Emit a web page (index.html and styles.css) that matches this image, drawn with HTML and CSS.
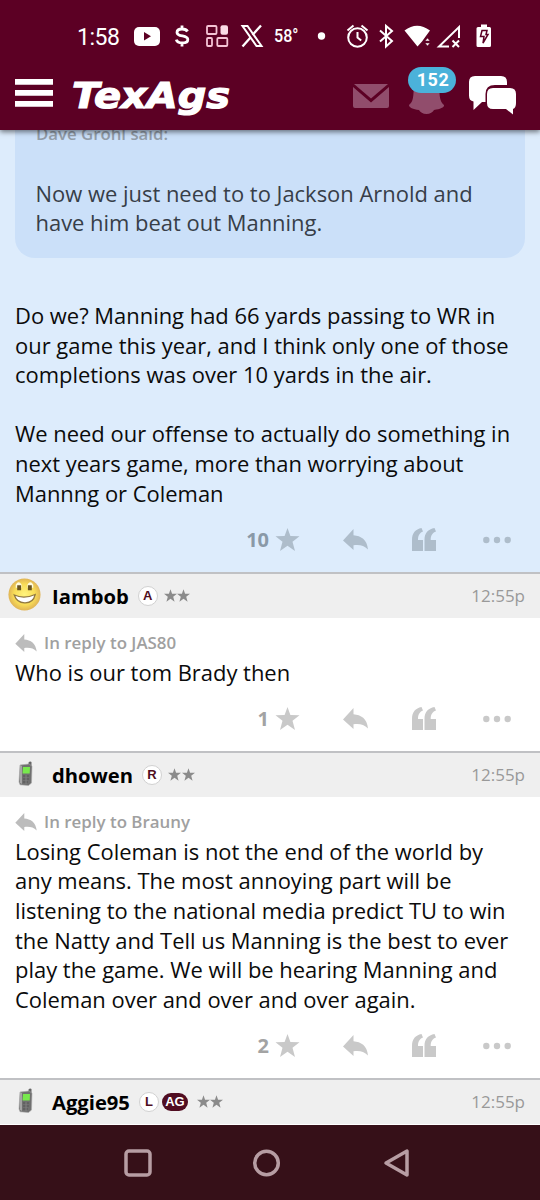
FILE: index.html
```html
<!DOCTYPE html>
<html lang="en">
<head>
<meta charset="utf-8">
<title>TexAgs</title>
<link rel="stylesheet" href="styles.css">
</head>
<body>
<svg class="defs" width="0" height="0">
  <symbol id="star" viewBox="0 0 24 23"><path d="M12 0l2.900 8.100 9.100.2-7 5.400 2.500 9.300L12 17.700 4.500 23 7 13.700 0 8.300l9.100-.2z"/></symbol>
  <symbol id="reply" viewBox="0 0 25 21"><path d="M0 11.500L10.500 0v6.300C18 7 24 10.500 25 20.500c-4-4.500-9-5-14.500-4.300V21z"/></symbol>
  <symbol id="quote" viewBox="0 0 24 23"><path d="M0 23V12C0 5 3.500 1.200 9.500 0L11 3.500C7.500 5 6 7.500 6 12h5v11zM12.500 23V12c0-7 3.500-10.800 10-12L24 3.500c-3.800 1.500-5.300 4-5.300 8.500H24v11z"/></symbol>
  <symbol id="dots" viewBox="0 0 28 8"><circle cx="3.300" cy="4" r="3.200"/><circle cx="14" cy="4" r="3.200"/><circle cx="24.700" cy="4" r="3.200"/></symbol>
  <symbol id="phone" viewBox="0 0 18 26">
    <path d="M11.500 1.500q1.500-1.500 3-.5v6h-3z" fill="#666"/>
    <path d="M3 4l9-1 3 2-.5 17-3 2.500-8.500-.7L2 21z" fill="#707070" stroke="#aaa" stroke-width=".6"/>
    <path d="M3 4l2 1v18l-2-1z" fill="#a5a5a5"/>
    <path d="M6 6h7l-.3 6.500H5.500z" fill="#78e94d"/>
    <path d="M6 15h6M6 18h6M6 21h5" stroke="#555" stroke-width="1.200"/>
    <path d="M9 14v9" stroke="#818181"/>
  </symbol>
</svg>

<header class="top">
  <div class="status">
    <svg width="540" height="72" viewBox="0 0 540 72" fill="#fff">
      <text class="clock" x="77" y="45" textLength="43">1:58</text>
      <rect x="134" y="27" width="26" height="19" rx="5"/><path d="M144 32l7 4.200-7 4.300z" fill="#5c0024"/>
      <path d="M182 25.500v4M182 42.500v4M187.500 31.500c-1-2-3-2.500-5.500-2.500-3 0-5 1.200-5 3.400 0 4.800 10.800 2.400 10.800 7 0 2.300-2.300 3.500-5.500 3.500s-5.300-1-6-3.300" fill="none" stroke="#fff" stroke-width="2.800"/>
      <g fill="none" stroke="#f5c3d5" stroke-width="1.800"><rect x="207" y="26" width="9.500" height="8" rx="1"/><rect x="207" y="38" width="5" height="8" rx="1"/><rect x="217.300" y="38" width="10" height="8" rx="1"/></g><rect x="220.500" y="25.200" width="7.500" height="9.500" rx="2" fill="#fbdbe6"/>
      <path d="M242.500 26h5l14 20h-5z" fill="none" stroke="#fff" stroke-width="2"/><path d="M261 25.500l-8.500 9.500M250.500 37.500l-8 9" fill="none" stroke="#fff" stroke-width="2.300"/>
      <text class="temp" x="274" y="42" textLength="24.500" lengthAdjust="spacingAndGlyphs">58°</text>
      <circle cx="321.500" cy="36" r="3.700"/>
      <g fill="none" stroke="#fff" stroke-width="2"><circle cx="357.500" cy="37.500" r="9.300"/><path d="M347.500 30.500l6-5M361.500 25.500l6 5M357.500 32v5.500l3.700 3"/>
      <path d="M380 30.500l12 10.500-6 5.500V26l6 5L380 41.500"/>
      <path d="M449 46.500H439L459 27v11"/><path d="M452.500 40.500l6.500 6.500M459 40.500l-6.500 6.500"/></g>
      <path d="M404.500 30.500q12.500-9.500 25.500 0l-5.500 7.500-2.500 3.500-4.500 5z"/><path d="M425 41l2.500-3 2.500 3zM425 43l2.500 3 2.500-3z" stroke="#5c0024" stroke-width=".5"/>
      <path d="M478 27h3v-2.500h6V27h2.500q1.500 0 1.500 1.500v17q0 1.500-1.500 1.500H478q-1.500 0-1.500-1.500v-17Q476.500 27 478 27z"/>
      <path d="M482 30.500h5l-1 4h2l-5 8.500 1-6.500h-3.500z" fill="#fff" stroke="#5c0024" stroke-width="1.500"/>
    </svg>
  </div>
  <div class="brandbar">
    <svg class="brand" width="540" height="58" viewBox="0 72 540 58" fill="#fff">
      <path d="M15 79h38v5.700H15zM15 90h38v5.700H15zM15 101h38v5.700H15z"/>
      <text class="logo" x="72" y="107.500" textLength="158" lengthAdjust="spacingAndGlyphs">TexAgs</text>
      <path d="M353 87l18 15.500L389 87v19q0 2-2 2h-32q-2 0-2-2z" fill="#914d6c"/><path d="M354 84h34l-17 14.500z" fill="#914d6c"/>
      <path d="M426.500 82c8 0 12.500 4 13 11 .3 6 1.500 9.500 4.500 12 .5 2.500-4 4-10 5-1 2-4 4-7.500 4s-6.500-2-7.500-4c-6-.7-10-2.500-10-5 3-2.500 4-5 4.500-12 0-7 5-11 13-11z" fill="#914d6c"/>
      <path d="M475 76h26q6 0 6 6v3h-12q-9.500 0-9.500 9v8h-3.500l-8.500 8v-8.500q-4.500-.7-4.500-6V82q0-6 6-6z"/>
      <path d="M493 88h17q6 0 6 6v9q0 5-3 6v5.500l-7-5.500H493q-6 0-6-6v-9q0-6 6-6z"/>
    </svg>
    <span class="count">152</span>
  </div>
</header>

<main class="feed">
  <article class="post mine">
    <blockquote class="quoted">
      <p class="said">Dave Grohl said:</p>
      <p class="q1">Now we just need to to Jackson Arnold and<br>have him beat out Manning.</p>
    </blockquote>
    <div class="body">Do we? Manning had 66 yards passing to WR in<br>our game this year, and I think only one of those<br>completions was over 10 yards in the air.<br><br>We need our offense to actually do something in<br>next years game, more than worrying about<br>Mannng or Coleman</div>
    <div class="actions"><span class="likes">10</span><svg class="a-star"><use href="#star"/></svg><svg class="a-reply"><use href="#reply"/></svg><svg class="a-quote"><use href="#quote"/></svg><svg class="a-dots"><use href="#dots"/></svg></div>
  </article>

  <article class="post">
    <div class="byline">
      <svg class="avatar" viewBox="0 0 36 36"><defs><radialGradient id="face"><stop offset="0" stop-color="#fff47e"/><stop offset=".65" stop-color="#f8dc57"/><stop offset="1" stop-color="#e0b455"/></radialGradient></defs><circle cx="18" cy="18" r="16.500" fill="url(#face)"/><path d="M9 8q3-5 6 0v3H9zM21 8q3-5 6 0v3h-6z" fill="#fffbe0"/><path d="M10.500 8.500h4v5h-4zM21.500 8.500h4v5h-4z" fill="#695421"/><path d="M7.500 18.500q10 4.500 21.500-.5-2 9-11 8.500-8 0-10.500-8z" fill="#fff" stroke="#91783f" stroke-width="1.300"/></svg>
      <b class="name">Iambob</b><span class="badge">A</span><svg class="rank"><use href="#star"/></svg><svg class="rank"><use href="#star"/></svg><time>12:55p</time>
    </div>
    <div class="replyto"><svg><use href="#reply"/></svg>In reply to JAS80</div>
    <div class="body">Who is our tom Brady then</div>
    <div class="actions"><span class="likes">1</span><svg class="a-star"><use href="#star"/></svg><svg class="a-reply"><use href="#reply"/></svg><svg class="a-quote"><use href="#quote"/></svg><svg class="a-dots"><use href="#dots"/></svg></div>
  </article>

  <article class="post">
    <div class="byline">
      <svg class="avatar phone"><use href="#phone"/></svg>
      <b class="name">dhowen</b><span class="badge">R</span><svg class="rank"><use href="#star"/></svg><svg class="rank"><use href="#star"/></svg><time>12:55p</time>
    </div>
    <div class="replyto"><svg><use href="#reply"/></svg>In reply to Brauny</div>
    <div class="body">Losing Coleman is not the end of the world by<br>any means. The most annoying part will be<br>listening to the national media predict TU to win<br>the Natty and Tell us Manning is the best to ever<br>play the game. We will be hearing Manning and<br>Coleman over and over and over again.</div>
    <div class="actions"><span class="likes">2</span><svg class="a-star"><use href="#star"/></svg><svg class="a-reply"><use href="#reply"/></svg><svg class="a-quote"><use href="#quote"/></svg><svg class="a-dots"><use href="#dots"/></svg></div>
  </article>

  <article class="post">
    <div class="byline">
      <svg class="avatar phone"><use href="#phone"/></svg>
      <b class="name">Aggie95</b><span class="badge">L</span><span class="badge ag">AG</span><svg class="rank"><use href="#star"/></svg><svg class="rank"><use href="#star"/></svg><time>12:55p</time>
    </div>
  </article>
</main>

<nav class="system">
  <svg width="540" height="75" viewBox="0 1125 540 75" fill="none" stroke="#b79da3" stroke-width="3.500" stroke-linejoin="round"><rect x="126" y="1151" width="24" height="24" rx="3"/><circle cx="266.500" cy="1163" r="11.800"/><path d="M386 1163l21-12v24z"/></svg>
</nav>
</body>
</html>
```
FILE: styles.css
```css
* { box-sizing: border-box; }
body {
  margin: 0;
  width: 540px;
  height: 1200px;
  display: flex;
  flex-direction: column;
  overflow: hidden;
  background: #fff;
  color: #0b0b0b;
  font-family: "Open Sans", "Noto Sans", sans-serif;
}
svg { display: block; flex: none; }
.defs { position: absolute; }

.top {
  height: 130px;
  flex: none;
  background: #5c0024;
  position: relative;
  z-index: 2;
  box-shadow: 0 2px 5px rgba(0, 0, 0, .5);
}
.status { height: 72px; }
.clock { font: 400 23px Roboto, sans-serif; }
.temp { font: 500 18.500px Roboto, sans-serif; }
.brandbar { position: relative; height: 58px; }
.logo {
  font: italic bold 35px "DejaVu Sans", sans-serif;
  stroke: #fff;
  stroke-width: 1.200px;
}
.count {
  position: absolute;
  left: 408px;
  top: -5px;
  width: 48px;
  height: 26px;
  border-radius: 13px;
  background: #4bb2da;
  color: #fff;
  font: bold 18px/26px Roboto, sans-serif;
  letter-spacing: .5px;
  text-align: center;
  padding-left: 2px;
}

.feed { height: 995px; flex: none; overflow: hidden; }
.post { border-bottom: 2px solid #c0c1c4; }
.post:last-child { border-bottom: 0; }
.mine { background: #ddecfc; height: 444px; }
.quoted {
  margin: 0 15px;
  height: 128px;
  padding: 0 21px;
  background: #cbe0f9;
  border-radius: 0 0 20px 20px;
  color: #373e48;
}
.quoted p { margin: 0; }
.said {
  height: 48.500px;
  font-weight: 600;
  font-size: 16.800px;
  line-height: 8px;
  color: #929ca8;
}
.q1, .body { font-size: 21.950px; line-height: 29.600px; white-space: nowrap; }
.q1 { margin-left: -.5px !important; }
.body { padding-left: 15px; }
.mine .body { padding-top: 43px; }
.actions {
  height: 63.700px;
  display: flex;
  align-items: center;
  justify-content: flex-end;
  padding-right: 29px;
  padding-bottom: 1px;
  fill: #c9c9c9;
}
.mine .actions { fill: #aebdcb; }
.likes { font-size: 20px; font-weight: 700; color: #a3a3a3; margin-right: 6px; }
.mine .likes { color: #8a99a7; }
.a-star { width: 25px; height: 23px; }
.a-reply { width: 25px; height: 21px; margin-left: 43px; }
.a-quote { width: 24px; height: 23px; margin-left: 44px; }
.a-dots { width: 28px; height: 8px; margin-left: 47px; }

.byline {
  height: 44px;
  display: flex;
  align-items: center;
  background: #efefef;
  padding: 0 15px 1px 7px;
}
.avatar { width: 35px; height: 35px; margin: -3px 10px 0 0; }
.phone { width: 18px; height: 26px; margin: -2px 17px 0 10px; }
.name { font-size: 20.200px; color: #000; }
.badge {
  width: 20px;
  height: 20px;
  margin-left: 9px;
  border: 1px solid #d1d1d1;
  border-radius: 10px;
  background: #fff;
  color: #500d21;
  font: bold 13px/18px "Liberation Sans", sans-serif;
  text-align: center;
}
.badge.ag { width: 26px; height: 18px; margin: 0 3px 0 3px; border: 0; background: #500d21; color: #fff; }
.rank { width: 13px; height: 13px; fill: #8b8b8b; margin-left: .5px; }
.badge + .rank { margin-left: 6px; }
time { margin-left: auto; font-size: 17px; color: #999; }
.replyto {
  display: flex;
  align-items: center;
  height: 39.800px;
  padding: 10px 0 0 15px;
  font-size: 16.900px;
  font-weight: 600;
  color: #a0a0a0;
}
.replyto svg { width: 22px; height: 18px; margin-right: 7px; fill: #bcbcbc; }
.system { height: 75px; flex: none; background: #361018; }
```
